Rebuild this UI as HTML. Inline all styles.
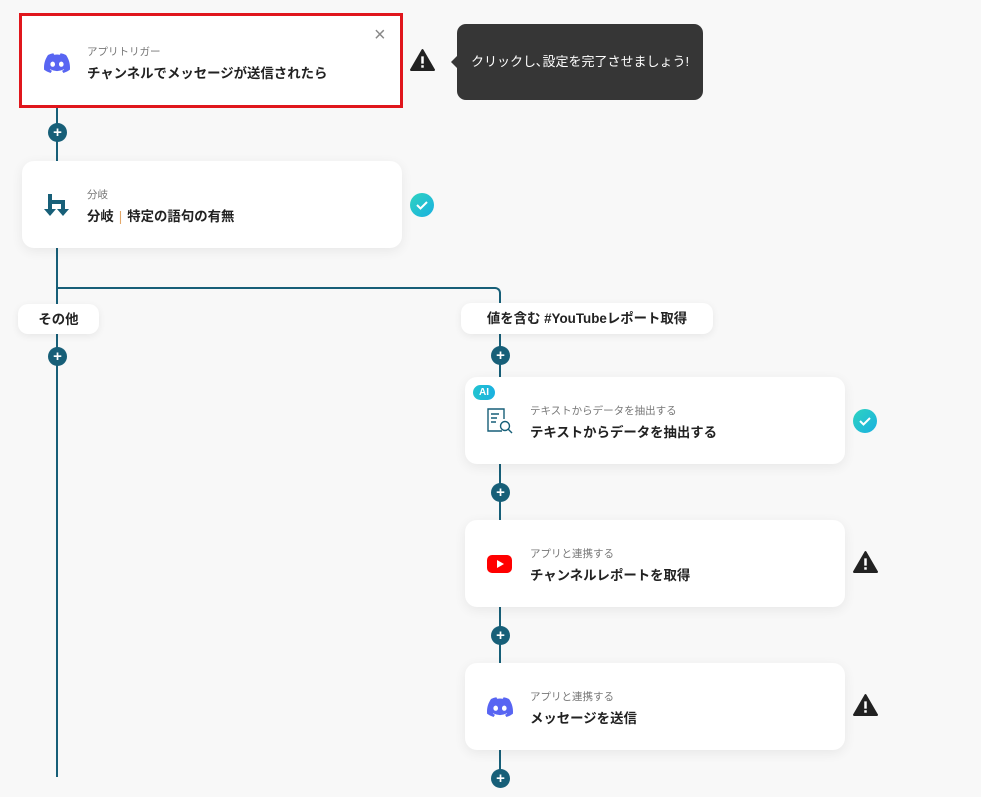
<!DOCTYPE html>
<html><head><meta charset="utf-8"><style>
*{box-sizing:border-box;margin:0;padding:0}
body{width:981px;height:797px;background:#f8f8f8;position:relative;overflow:hidden;font-family:"Liberation Sans","Noto Sans CJK JP",sans-serif;color:#222}
.card{position:absolute;background:#fff;border-radius:12px;box-shadow:0 3px 12px rgba(0,0,0,.07)}
.lbl{position:absolute;font-size:10.5px;color:#777}
.ttl{position:absolute;font-size:13.4px;font-weight:bold;color:#222;white-space:nowrap}
.v{position:absolute;width:2px;background:#175f78}
.plus{position:absolute;width:19px;height:19px;border-radius:50%;background:#175f78;color:#fff;font-size:15px;font-weight:bold;line-height:19px;text-align:center}
.pill{position:absolute;background:#fff;border-radius:10px;box-shadow:0 2px 8px rgba(0,0,0,.07);font-size:13.4px;font-weight:bold;text-align:center;line-height:31px}
.chk{position:absolute;width:24px;height:24px;border-radius:50%;background:linear-gradient(135deg,#2ed3c0,#1ab0e0)}
</style></head><body>
<div class="v" style="left:56px;top:105px;height:672px"></div>
<div style="position:absolute;left:56px;top:287px;width:445px;height:30px;border-top:2px solid #175f78;border-right:2px solid #175f78;border-top-right-radius:6px"></div>
<div class="v" style="left:499px;top:315px;height:470px"></div>

<div style="position:absolute;left:19px;top:13px;width:384px;height:95px;border:3px solid #e0161c;background:#fff"></div>
<svg style="position:absolute;left:44px;top:53px" width="26" height="20" viewBox="0 0 26 20"><path d="M22 2A21 21 0 0 0 16.6.3l-.7 1.4a19 19 0 0 0-5.8 0L9.4.3A21 21 0 0 0 4 2C.6 7 -.3 11.9.1 16.7A21 21 0 0 0 6.6 20l1.4-2.2a13 13 0 0 1-2.2-1l.5-.4a15 15 0 0 0 13.4 0l.5.4a13 13 0 0 1-2.2 1L19.4 20a21 21 0 0 0 6.5-3.3C26.4 11.1 25 6.3 22 2zM8.7 13.8c-1.3 0-2.3-1.2-2.3-2.6s1-2.6 2.3-2.6 2.3 1.2 2.3 2.6-1 2.6-2.3 2.6zm8.6 0c-1.3 0-2.3-1.2-2.3-2.6s1-2.6 2.3-2.6 2.3 1.2 2.3 2.6-1 2.6-2.3 2.6z" fill="#5865f2"/></svg>
<div class="lbl" style="left:87px;top:44px">アプリトリガー</div>
<div class="ttl" style="left:87px;top:62px">チャンネルでメッセージが送信されたら</div>
<div style="position:absolute;left:374px;top:25px;font-size:20px;color:#888;line-height:20px">×</div>
<svg style="position:absolute;left:410px;top:49px" width="25" height="22" viewBox="0 0 24 21"><path d="M12 1L23 20H1z" fill="#222" stroke="#222" stroke-width="2" stroke-linejoin="round"/><rect x="10.8" y="7" width="2.4" height="7" fill="#fff"/><rect x="10.8" y="15.5" width="2.4" height="2.4" fill="#fff"/></svg>
<div style="position:absolute;left:457px;top:24px;width:246px;height:76px;background:#363636;border-radius:9px;color:#fff;font-size:13px;line-height:76px;text-align:center">クリックし､設定を完了させましょう!</div>
<div style="position:absolute;left:451px;top:56px;border:6px solid transparent;border-right-color:#363636;border-left:0"></div>

<div class="plus" style="left:48px;top:123px">+</div>

<div class="card" style="left:22px;top:161px;width:380px;height:87px"></div>
<svg style="position:absolute;left:44px;top:192px" width="26" height="27" viewBox="0 0 26 27"><path d="M6 2v16M6 10h13v8" stroke="#175f78" stroke-width="4" fill="none"/><path d="M0 17h12l-6 7zM13 17h12l-6 7z" fill="#175f78"/></svg>
<div class="lbl" style="left:87px;top:187px">分岐</div>
<div class="ttl" style="left:87px;top:205px">分岐<span style="color:#e3a86a;font-weight:normal;margin:0 5px">|</span>特定の語句の有無</div>
<div class="chk" style="left:410px;top:193px"></div>
<svg style="position:absolute;left:410px;top:193px" width="24" height="24"><path d="M7 12l3.5 3.5L17 9" stroke="#fff" stroke-width="2" fill="none"/></svg>

<div class="pill" style="left:18px;top:304px;width:81px;height:30px">その他</div>
<div class="pill" style="left:461px;top:303px;width:252px;height:31px">値を含む #YouTubeレポート取得</div>
<div class="plus" style="left:48px;top:347px">+</div>
<div class="plus" style="left:491px;top:346px">+</div>

<div class="card" style="left:465px;top:377px;width:380px;height:87px"></div>
<div style="position:absolute;left:473px;top:385px;width:22px;height:15px;border-radius:8px;background:linear-gradient(90deg,#22c4d0,#1ab0e0);color:#fff;font-size:10px;font-weight:bold;text-align:center;line-height:15px">AI</div>
<svg style="position:absolute;left:486px;top:407px" width="28" height="28" viewBox="0 0 28 28" fill="none" stroke="#175f78" stroke-width="1.4"><path d="M16 24H2V2h16v10"/><path d="M5 7h8M5 11h6M5 15h5"/><circle cx="19" cy="19" r="4.5"/><path d="M22 22l4 4"/></svg>
<div class="lbl" style="left:530px;top:403px">テキストからデータを抽出する</div>
<div class="ttl" style="left:530px;top:421px">テキストからデータを抽出する</div>
<div class="chk" style="left:853px;top:409px"></div>
<svg style="position:absolute;left:853px;top:409px" width="24" height="24"><path d="M7 12l3.5 3.5L17 9" stroke="#fff" stroke-width="2" fill="none"/></svg>

<div class="plus" style="left:491px;top:483px">+</div>

<div class="card" style="left:465px;top:520px;width:380px;height:87px"></div>
<svg style="position:absolute;left:487px;top:555px" width="25" height="18" viewBox="0 0 25 18"><rect width="25" height="18" rx="5" fill="#f00"/><path d="M10 5v8l7-4z" fill="#fff"/></svg>
<div class="lbl" style="left:530px;top:546px">アプリと連携する</div>
<div class="ttl" style="left:530px;top:564px">チャンネルレポートを取得</div>
<svg style="position:absolute;left:853px;top:551px" width="25" height="22" viewBox="0 0 24 21"><path d="M12 1L23 20H1z" fill="#222" stroke="#222" stroke-width="2" stroke-linejoin="round"/><rect x="10.8" y="7" width="2.4" height="7" fill="#fff"/><rect x="10.8" y="15.5" width="2.4" height="2.4" fill="#fff"/></svg>

<div class="plus" style="left:491px;top:626px">+</div>

<div class="card" style="left:465px;top:663px;width:380px;height:87px"></div>
<svg style="position:absolute;left:487px;top:697px" width="26" height="20" viewBox="0 0 26 20"><path d="M22 2A21 21 0 0 0 16.6.3l-.7 1.4a19 19 0 0 0-5.8 0L9.4.3A21 21 0 0 0 4 2C.6 7 -.3 11.9.1 16.7A21 21 0 0 0 6.6 20l1.4-2.2a13 13 0 0 1-2.2-1l.5-.4a15 15 0 0 0 13.4 0l.5.4a13 13 0 0 1-2.2 1L19.4 20a21 21 0 0 0 6.5-3.3C26.4 11.1 25 6.3 22 2zM8.7 13.8c-1.3 0-2.3-1.2-2.3-2.6s1-2.6 2.3-2.6 2.3 1.2 2.3 2.6-1 2.6-2.3 2.6zm8.6 0c-1.3 0-2.3-1.2-2.3-2.6s1-2.6 2.3-2.6 2.3 1.2 2.3 2.6-1 2.6-2.3 2.6z" fill="#5865f2"/></svg>
<div class="lbl" style="left:530px;top:689px">アプリと連携する</div>
<div class="ttl" style="left:530px;top:707px">メッセージを送信</div>
<svg style="position:absolute;left:853px;top:694px" width="25" height="22" viewBox="0 0 24 21"><path d="M12 1L23 20H1z" fill="#222" stroke="#222" stroke-width="2" stroke-linejoin="round"/><rect x="10.8" y="7" width="2.4" height="7" fill="#fff"/><rect x="10.8" y="15.5" width="2.4" height="2.4" fill="#fff"/></svg>

<div class="plus" style="left:491px;top:769px">+</div>
</body></html>
